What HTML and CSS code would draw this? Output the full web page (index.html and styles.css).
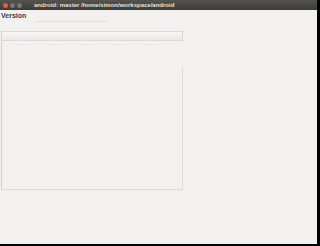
FILE: index.html
```html
<!DOCTYPE html>
<html lang="en">
<head>
    <meta charset="UTF-8">
    <title>android: master /home/simon/workspace/android</title>
<link rel="stylesheet" href="styles.css">
</head>
<body>
    <div class="window">
        <div class="titlebar">
            <div class="buttons">
                <span class="btn close"></span>
                <span class="btn"></span>
                <span class="btn"></span>
            </div>
            <div class="title">android: master /home/simon/workspace/android</div>
        </div>
        <div class="content">
            <div class="label-row">
                <span class="label">Version</span>
                <span class="combo-line"></span>
            </div>
            <div class="pane">
                <div class="header"></div>
                <div class="cols">
                    <span></span><span></span><span></span><span></span><span></span>
                </div>
                <div class="list"></div>
            </div>
        </div>
    </div>
</body>
</html>
```

FILE: styles.css
```css
html {
    background-color: #000;
}
body {
    margin: 0;
    width: 320px;
    height: 246px;
    font-family: 'Liberation Sans', Arial, sans-serif;
}
.window {
    width: 317px;
    height: 244px;
    background-color: #f2f1f0;
    display: flex;
    flex-direction: column;
}
.titlebar {
    height: 10px;
    background: linear-gradient(#55534d, #3c3b37);
    display: flex;
    align-items: center;
}
.buttons {
    display: flex;
    gap: 2px;
    padding-left: 3px;
}
.btn {
    width: 5px;
    height: 5px;
    border-radius: 50%;
    background-color: #7a7873;
}
.btn.close {
    background-color: #e0602f;
}
.title {
    font-size: 6px;
    font-weight: bold;
    color: #e4e1da;
    margin-left: 12px;
    white-space: nowrap;
}
.content {
    flex: 1;
    display: flex;
    flex-direction: column;
}
.label-row {
    display: flex;
    align-items: flex-end;
    height: 13px;
    padding-left: 1px;
}
.label {
    font-size: 7px;
    font-weight: bold;
    color: #3a3a3a;
    line-height: 8px;
    margin-top: 2px;
    align-self: flex-start;
}
.combo-line {
    width: 72px;
    height: 1px;
    background-color: #e2e0dd;
    margin-left: 9px;
    margin-bottom: 1px;
}
.pane {
    width: 182px;
    margin-left: 1px;
    margin-top: 8px;
    display: flex;
    flex-direction: column;
}
.header {
    height: 8px;
    border: 1px solid #dcdad6;
    border-left-color: #d2d0cc;
    background: linear-gradient(#f7f6f5, #e9e8e6);
}
.cols {
    display: flex;
    gap: 17px;
    padding: 3px 0 0 14px;
    height: 2px;
    border-left: 1px solid #d2d0cc;
}
.cols span {
    width: 15px;
    height: 1px;
    background-color: #ebe9e6;
}
.list {
    height: 143px;
    border-left: 1px solid #d2d0cc;
    border-bottom: 1px solid #dcdad6;
    background: linear-gradient(to right, transparent 180px, #dedcd8 180px, #dedcd8 181px, transparent 181px) no-repeat 0 21px / 182px 122px;
}
```
